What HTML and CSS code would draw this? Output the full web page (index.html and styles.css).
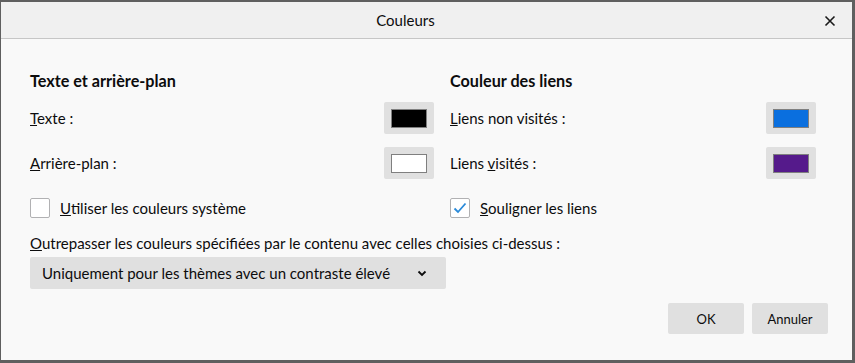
FILE: index.html
```html
<!DOCTYPE html>
<html lang="fr">
<head>
    <meta charset="UTF-8" />
    <title>Couleurs</title>
    <link rel="stylesheet" href="styles.css">
</head>
<body>
    <div class="dialog">
        <!-- Title bar -->
        <div class="titlebar">
            <span class="title">Couleurs</span>
            <svg class="close" width="12" height="12" viewBox="0 0 12 12">
                <path d="M1.5 1.5 L10.5 10.5 M10.5 1.5 L1.5 10.5" stroke="#1a1a1a" stroke-width="1.6" fill="none" />
            </svg>
        </div>

        <div class="content">
            <div class="columns">
                <!-- Text and background -->
                <div class="group">
                    <h2>Texte et arrière-plan</h2>
                    <div class="row">
                        <span><u>T</u>exte :</span>
                        <button class="color-btn"><span class="swatch swatch-black"></span></button>
                    </div>
                    <div class="row">
                        <span><u>A</u>rrière-plan :</span>
                        <button class="color-btn"><span class="swatch swatch-white"></span></button>
                    </div>
                    <label class="check">
                        <span class="box"></span>
                        <span><u>U</u>tiliser les couleurs système</span>
                    </label>
                </div>

                <!-- Link colors -->
                <div class="group">
                    <h2>Couleur des liens</h2>
                    <div class="row">
                        <span><u>L</u>iens non visités :</span>
                        <button class="color-btn"><span class="swatch swatch-blue"></span></button>
                    </div>
                    <div class="row">
                        <span>Liens <u>v</u>isités :</span>
                        <button class="color-btn"><span class="swatch swatch-purple"></span></button>
                    </div>
                    <label class="check">
                        <span class="box">
                            <svg width="14" height="12" viewBox="0 0 14 12">
                                <path d="M1.5 6.5 L5 10 L12.5 1.5" stroke="#2a8ad9" stroke-width="1.8" fill="none" />
                            </svg>
                        </span>
                        <span><u>S</u>ouligner les liens</span>
                    </label>
                </div>
            </div>

            <p class="override"><u>O</u>utrepasser les couleurs spécifiées par le contenu avec celles choisies ci-dessus :</p>

            <div class="select">
                <span>Uniquement pour les thèmes avec un contraste élevé</span>
                <svg width="10" height="7" viewBox="0 0 10 7">
                    <path d="M1.5 1.5 L5 5 L8.5 1.5" stroke="#0c0c0d" stroke-width="1.8" fill="none" />
                </svg>
            </div>

            <div class="actions">
                <button class="btn">OK</button>
                <button class="btn">Annuler</button>
            </div>
        </div>
    </div>
</body>
</html>
```

FILE: styles.css
```css
* {
    box-sizing: border-box;
    margin: 0;
    padding: 0;
}

html, body {
    height: 100%;
}

body {
    background: #5f5f5f;
    padding: 2px 3px 3px 1px;
    font-family: Lato, "Liberation Sans", sans-serif;
    font-size: 15px;
    color: #0c0c0d;
}

.dialog {
    height: 358px;
    background: #f9f9f9;
    display: flex;
    flex-direction: column;
}

.titlebar {
    height: 37px;
    padding-right: 42px;
    background: #f0f0f0;
    border-bottom: 1px solid #c6c6c6;
    display: flex;
    align-items: center;
    justify-content: center;
    position: relative;
}

.title {
    font-size: 15px;
}

.close {
    position: absolute;
    right: 16px;
    top: 13px;
}

.content {
    padding: 31px 24px 0 29px;
    display: flex;
    flex-direction: column;
}

.columns {
    display: grid;
    grid-template-columns: 404px 366px;
    column-gap: 16px;
}

.group {
    display: flex;
    flex-direction: column;
}

h2 {
    font-size: 16.2px;
    font-weight: 700;
    height: 22px;
    line-height: 22px;
    margin-bottom: 10px;
}

.row {
    height: 32px;
    display: flex;
    align-items: center;
    justify-content: space-between;
    margin-bottom: 13px;
}

.color-btn {
    width: 50px;
    height: 32px;
    border: none;
    border-radius: 2px;
    background: #e0e0e0;
    display: flex;
    align-items: center;
    justify-content: center;
}

.swatch {
    width: 36px;
    height: 19px;
    border: 1px solid #7f7f7f;
}

.swatch-black { background: #000000; }
.swatch-white { background: #ffffff; }
.swatch-blue { background: #0a6fdf; }
.swatch-purple { background: #551a8b; }

.check {
    height: 20px;
    margin-top: 6px;
    display: flex;
    align-items: center;
    gap: 10px;
}

.box {
    width: 20px;
    height: 20px;
    border: 1px solid #b1b1b3;
    border-radius: 2px;
    background: #ffffff;
    display: flex;
    align-items: center;
    justify-content: center;
}

.override {
    height: 20px;
    line-height: 20px;
    margin-top: 15px;
}

.select {
    width: 416px;
    height: 32px;
    margin-top: 4px;
    padding: 0 19px 0 12px;
    background: #e0e0e0;
    border-radius: 2px;
    display: flex;
    align-items: center;
    justify-content: space-between;
}

.actions {
    display: flex;
    justify-content: flex-end;
    gap: 8px;
    margin-top: 14px;
}

.btn {
    width: 76px;
    height: 31px;
    border: none;
    border-radius: 2px;
    background: #e0e0e0;
    font-family: Lato, "Liberation Sans", sans-serif;
    font-size: 13px;
    color: #0c0c0d;
}
```
